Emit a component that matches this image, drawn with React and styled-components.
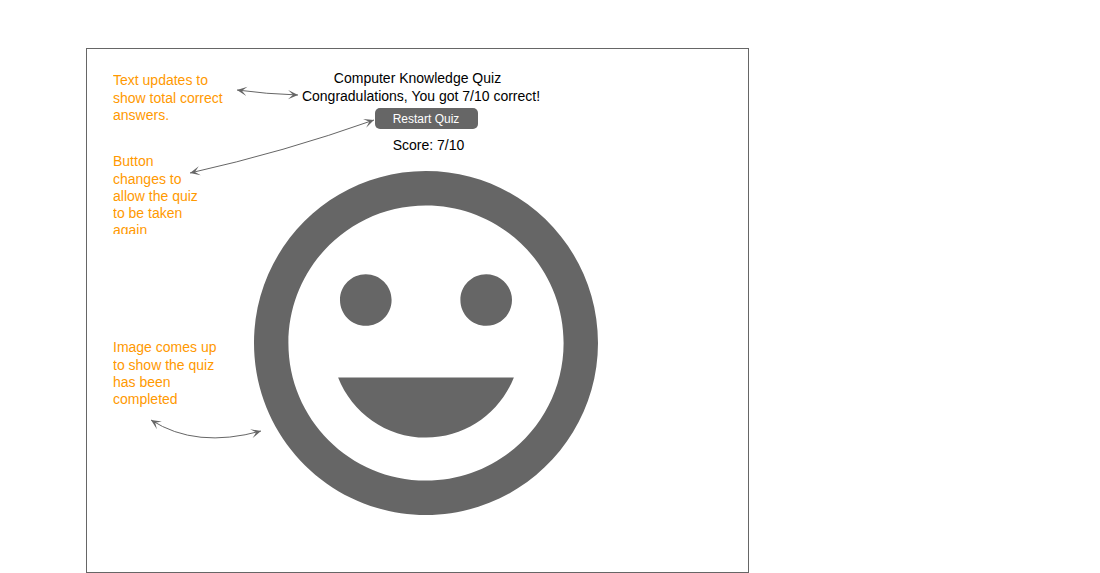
import React from "react";
import styled, { createGlobalStyle } from "styled-components";

const GlobalStyle = createGlobalStyle`
  body {
    margin: 0;
    background: #fff;
    color: #000;
    font: 14px/18px "Liberation Sans", Arial, sans-serif;
  }
`;

const Page = styled.div`
  box-sizing: border-box;
  min-height: 100vh;
  display: flex;
  padding: 48px 86px 0;
`;

const Frame = styled.main`
  position: relative;
  box-sizing: border-box;
  flex: 0 1 663px;
  display: grid;
  grid-template-columns: 112px 1fr 112px;
  padding: 20px 26px 57px;
  border: 1px solid #666;
`;

const Notes = styled.aside`
  display: flex;
  flex-direction: column;
  padding-top: 2px;
`;

const Note = styled.p`
  margin: 0;
  max-width: ${(p) => p.$width};
  max-height: ${(p) => p.$maxHeight};
  margin-bottom: ${(p) => p.$gap};
  overflow: hidden;
  line-height: 17px;
  color: #f90;

  &::first-line {
    line-height: 19px;
  }
`;

const Quiz = styled.section`
  text-align: center;
`;

const Title = styled.h1`
  margin: 0;
  font-size: 14px;
  font-weight: 400;
`;

const Message = styled.p`
  margin: 0 0 3px;
  padding-left: 7px;
`;

const Result = styled.div`
  display: flex;
  flex-direction: column;
  align-items: center;
  padding-left: 17px;
`;

const RestartButton = styled.button`
  box-sizing: border-box;
  min-width: 103px;
  height: 21px;
  padding: 2px 0 0;
  border: 0;
  border-radius: 5px;
  background: #666;
  color: #fff;
  font: 12px/19px "Liberation Sans", Arial, sans-serif;
`;

const Score = styled.p`
  margin: 7px 0 17px;
  padding-left: 5px;
`;

const Face = styled.svg`
  display: block;
  width: 344px;
  max-width: 100%;
  fill: #666;
`;

const Arrows = styled.svg`
  position: absolute;
  top: 0;
  left: 0;
  width: 320px;
  height: 420px;
  pointer-events: none;
  fill: none;
  stroke: #666;
`;

export default function App() {
  return (
    <>
      <GlobalStyle />
      <Page>
        <Frame>
          <Notes>
            <Note $gap="28px">Text updates to show total correct answers.</Note>
            <Note $width="90px" $maxHeight="82px" $gap="104px">
              Button changes to allow the quiz to be taken again
            </Note>
            <Note>Image comes up to show the quiz has been completed</Note>
          </Notes>
          <Quiz>
            <Title>Computer Knowledge Quiz</Title>
            <Message>Congradulations, You got 7/10 correct!</Message>
            <Result>
              <RestartButton type="button">Restart Quiz</RestartButton>
              <Score>Score: 7/10</Score>
              <Face viewBox="2 2 20 20" role="img" aria-label="Smiling face">
                <path d="M11.99 2C6.47 2 2 6.48 2 12s4.47 10 9.99 10C17.52 22 22 17.52 22 12S17.52 2 11.99 2zM12 20c-4.42 0-8-3.58-8-8s3.58-8 8-8 8 3.58 8 8-3.58 8-8 8zm3.5-9c.83 0 1.5-.67 1.5-1.5S16.33 8 15.5 8 14 8.67 14 9.5s.67 1.5 1.5 1.5zm-7 0c.83 0 1.5-.67 1.5-1.5S9.33 8 8.5 8 7 8.67 7 9.5 7.67 11 8.5 11zm3.5 6.5c2.33 0 4.31-1.46 5.11-3.5H6.89c.8 2.04 2.78 3.5 5.11 3.5z" />
              </Face>
            </Result>
          </Quiz>
          <Arrows viewBox="87 49 320 420" aria-hidden="true">
            <defs>
              <marker
                id="head"
                viewBox="-10 -5 11 10"
                markerWidth="11"
                markerHeight="10"
                markerUnits="userSpaceOnUse"
                orient="auto-start-reverse"
              >
                <path d="M0 0L-10 -4.6L-5 0L-10 4.6Z" fill="#666" stroke="none" />
              </marker>
            </defs>
            <g markerStart="url(#head)" markerEnd="url(#head)">
              <path d="M237 90Q266 94 298 95" />
              <path d="M190 173Q284 152 374 120" />
              <path d="M151 420Q196 449 261 431" />
            </g>
          </Arrows>
        </Frame>
      </Page>
    </>
  );
}
